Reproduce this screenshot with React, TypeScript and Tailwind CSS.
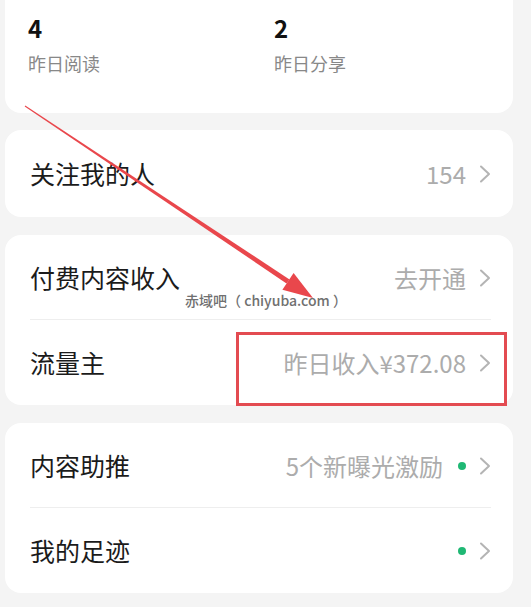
import React from 'react';

function Chevron() {
  return (
    <svg width="14" height="20" viewBox="0 0 14 20" fill="none" className="shrink-0">
      <path d="M3 2.5 L11 10 L3 17.5" stroke="#b4b4b4" strokeWidth="2" strokeLinecap="round" strokeLinejoin="round" />
    </svg>
  );
}

function Row({ label, value, dot, divider }: { label: string; value?: string; dot?: boolean; divider?: boolean }) {
  return (
    <div className="relative flex items-center justify-between h-[85px] pl-[25px] pr-[21px]">
      <span className="text-[25px] text-[#1b1b1b] leading-none">{label}</span>
      <div className="flex items-center">
        {value && <span className="text-[24px] text-[#acacac] leading-none">{value}</span>}
        {dot && <span className="ml-[15px] w-[8px] h-[8px] rounded-full bg-[#1fb874]" />}
        <span className="ml-[12px]">
          <Chevron />
        </span>
      </div>
      {divider && <div className="absolute left-[25px] right-[22px] bottom-0 h-px bg-[#eeeeee]" />}
    </div>
  );
}

export default function App() {
  return (
    <div
      className="relative w-[531px] h-[607px] overflow-hidden bg-[#f4f4f4]"
      style={{ fontFamily: '"Noto Sans CJK SC", "Noto Sans", sans-serif' }}
    >
      {/* Stats card (top cut off) */}
      <div className="ml-[5px] w-[508px] h-[113px] bg-white rounded-b-[16px] flex pl-[23px] pt-[14px]">
        <div className="w-[246px]">
          <div className="text-[24px] font-bold text-[#111] leading-[28px]">4</div>
          <div className="mt-[9px] text-[18px] text-[#888] leading-[24px]">昨日阅读</div>
        </div>
        <div>
          <div className="text-[24px] font-bold text-[#111] leading-[28px]">2</div>
          <div className="mt-[9px] text-[18px] text-[#888] leading-[24px]">昨日分享</div>
        </div>
      </div>

      <div className="ml-[5px] mt-[17px] w-[508px] bg-white rounded-[16px] h-[87px] flex flex-col justify-center">
        <Row label="关注我的人" value="154" />
      </div>

      <div className="ml-[5px] mt-[18px] w-[508px] bg-white rounded-[16px]">
        <Row label="付费内容收入" value="去开通" divider />
        <Row label="流量主" value="昨日收入¥372.08" />
      </div>

      <div className="ml-[5px] mt-[18px] w-[508px] bg-white rounded-[16px]">
        <Row label="内容助推" value="5个新曝光激励" dot divider />
        <Row label="我的足迹" dot />
      </div>

      {/* Annotation overlays */}
      <svg className="absolute left-0 top-0" width="531" height="607" viewBox="0 0 531 607">
        <polygon points="24.7,106.4 25.3,105.6 289.5,279.4 286.5,283.4" fill="#e9474c" />
        <polygon points="313,298 282.4,289.7 293.6,273.1" fill="#e9474c" />
      </svg>
      <div className="absolute left-[236px] top-[332px] w-[271px] h-[74px] border-[3px] border-[#e34b51]" />
      <div className="absolute left-[185px] top-[290px] text-[14px] font-medium text-[#707070] leading-[20px] whitespace-nowrap">
        赤域吧（ chiyuba.com ）
      </div>
    </div>
  );
}
